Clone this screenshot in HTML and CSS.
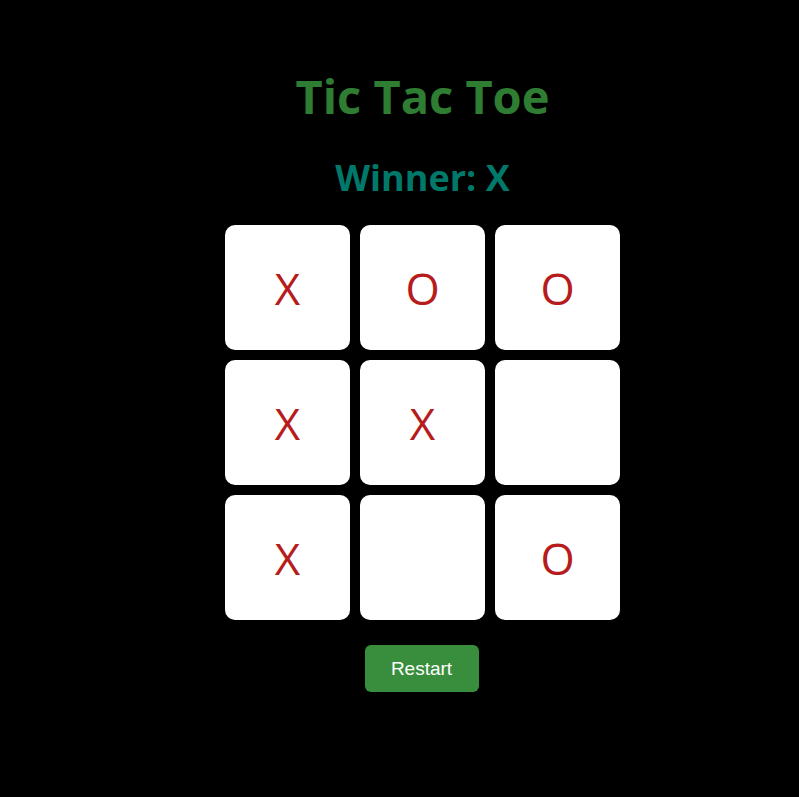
FILE: index.html
```html
<!DOCTYPE html>
<html>
<head>
<meta charset="utf-8">
<link rel="stylesheet" href="styles.css">
</head>
<body>
<div class="app">
  <h1 class="title">Tic Tac Toe</h1>
  <h2 class="status">Winner: X</h2>
  <div class="board">
    <button class="cell">X</button>
    <button class="cell">O</button>
    <button class="cell">O</button>
    <button class="cell">X</button>
    <button class="cell">X</button>
    <button class="cell"></button>
    <button class="cell">X</button>
    <button class="cell"></button>
    <button class="cell">O</button>
  </div>
  <button class="restart">Restart</button>
</div>
</body>
</html>
```
FILE: styles.css
```css
html, body {
  margin: 0;
  padding: 0;
  background: #000;
}
body {
  font-family: "Open Sans", "Noto Sans", sans-serif;
}
.app {
  display: flex;
  flex-direction: column;
  align-items: center;
  padding-left: 46px;
  padding-top: 64px;
}
.title {
  margin: 0;
  color: #2e7d32;
  font-size: 47px;
  font-weight: 700;
  line-height: 64px;
  letter-spacing: 0;
}
.status {
  margin: 28px 0 0 0;
  color: #00796b;
  font-size: 36px;
  font-weight: 700;
  line-height: 44px;
  letter-spacing: 0;
}
.board {
  margin-top: 25px;
  display: grid;
  grid-template-columns: repeat(3, 125px);
  grid-auto-rows: 125px;
  gap: 10px;
}
.cell {
  border: none;
  background: #fff;
  border-radius: 10px;
  color: #b71c1c;
  font-family: "Open Sans", "Noto Sans", sans-serif;
  font-size: 44px;
  font-weight: 400;
  padding: 0;
  display: flex;
  align-items: center;
  justify-content: center;
}
.restart {
  margin-top: 25px;
  margin-right: 2px;
  width: 114px;
  height: 47px;
  border: none;
  border-radius: 6px;
  background: #388e3c;
  color: #fff;
  font-family: "Liberation Sans", Arial, sans-serif;
  font-size: 19px;
  padding: 0;
}
```
